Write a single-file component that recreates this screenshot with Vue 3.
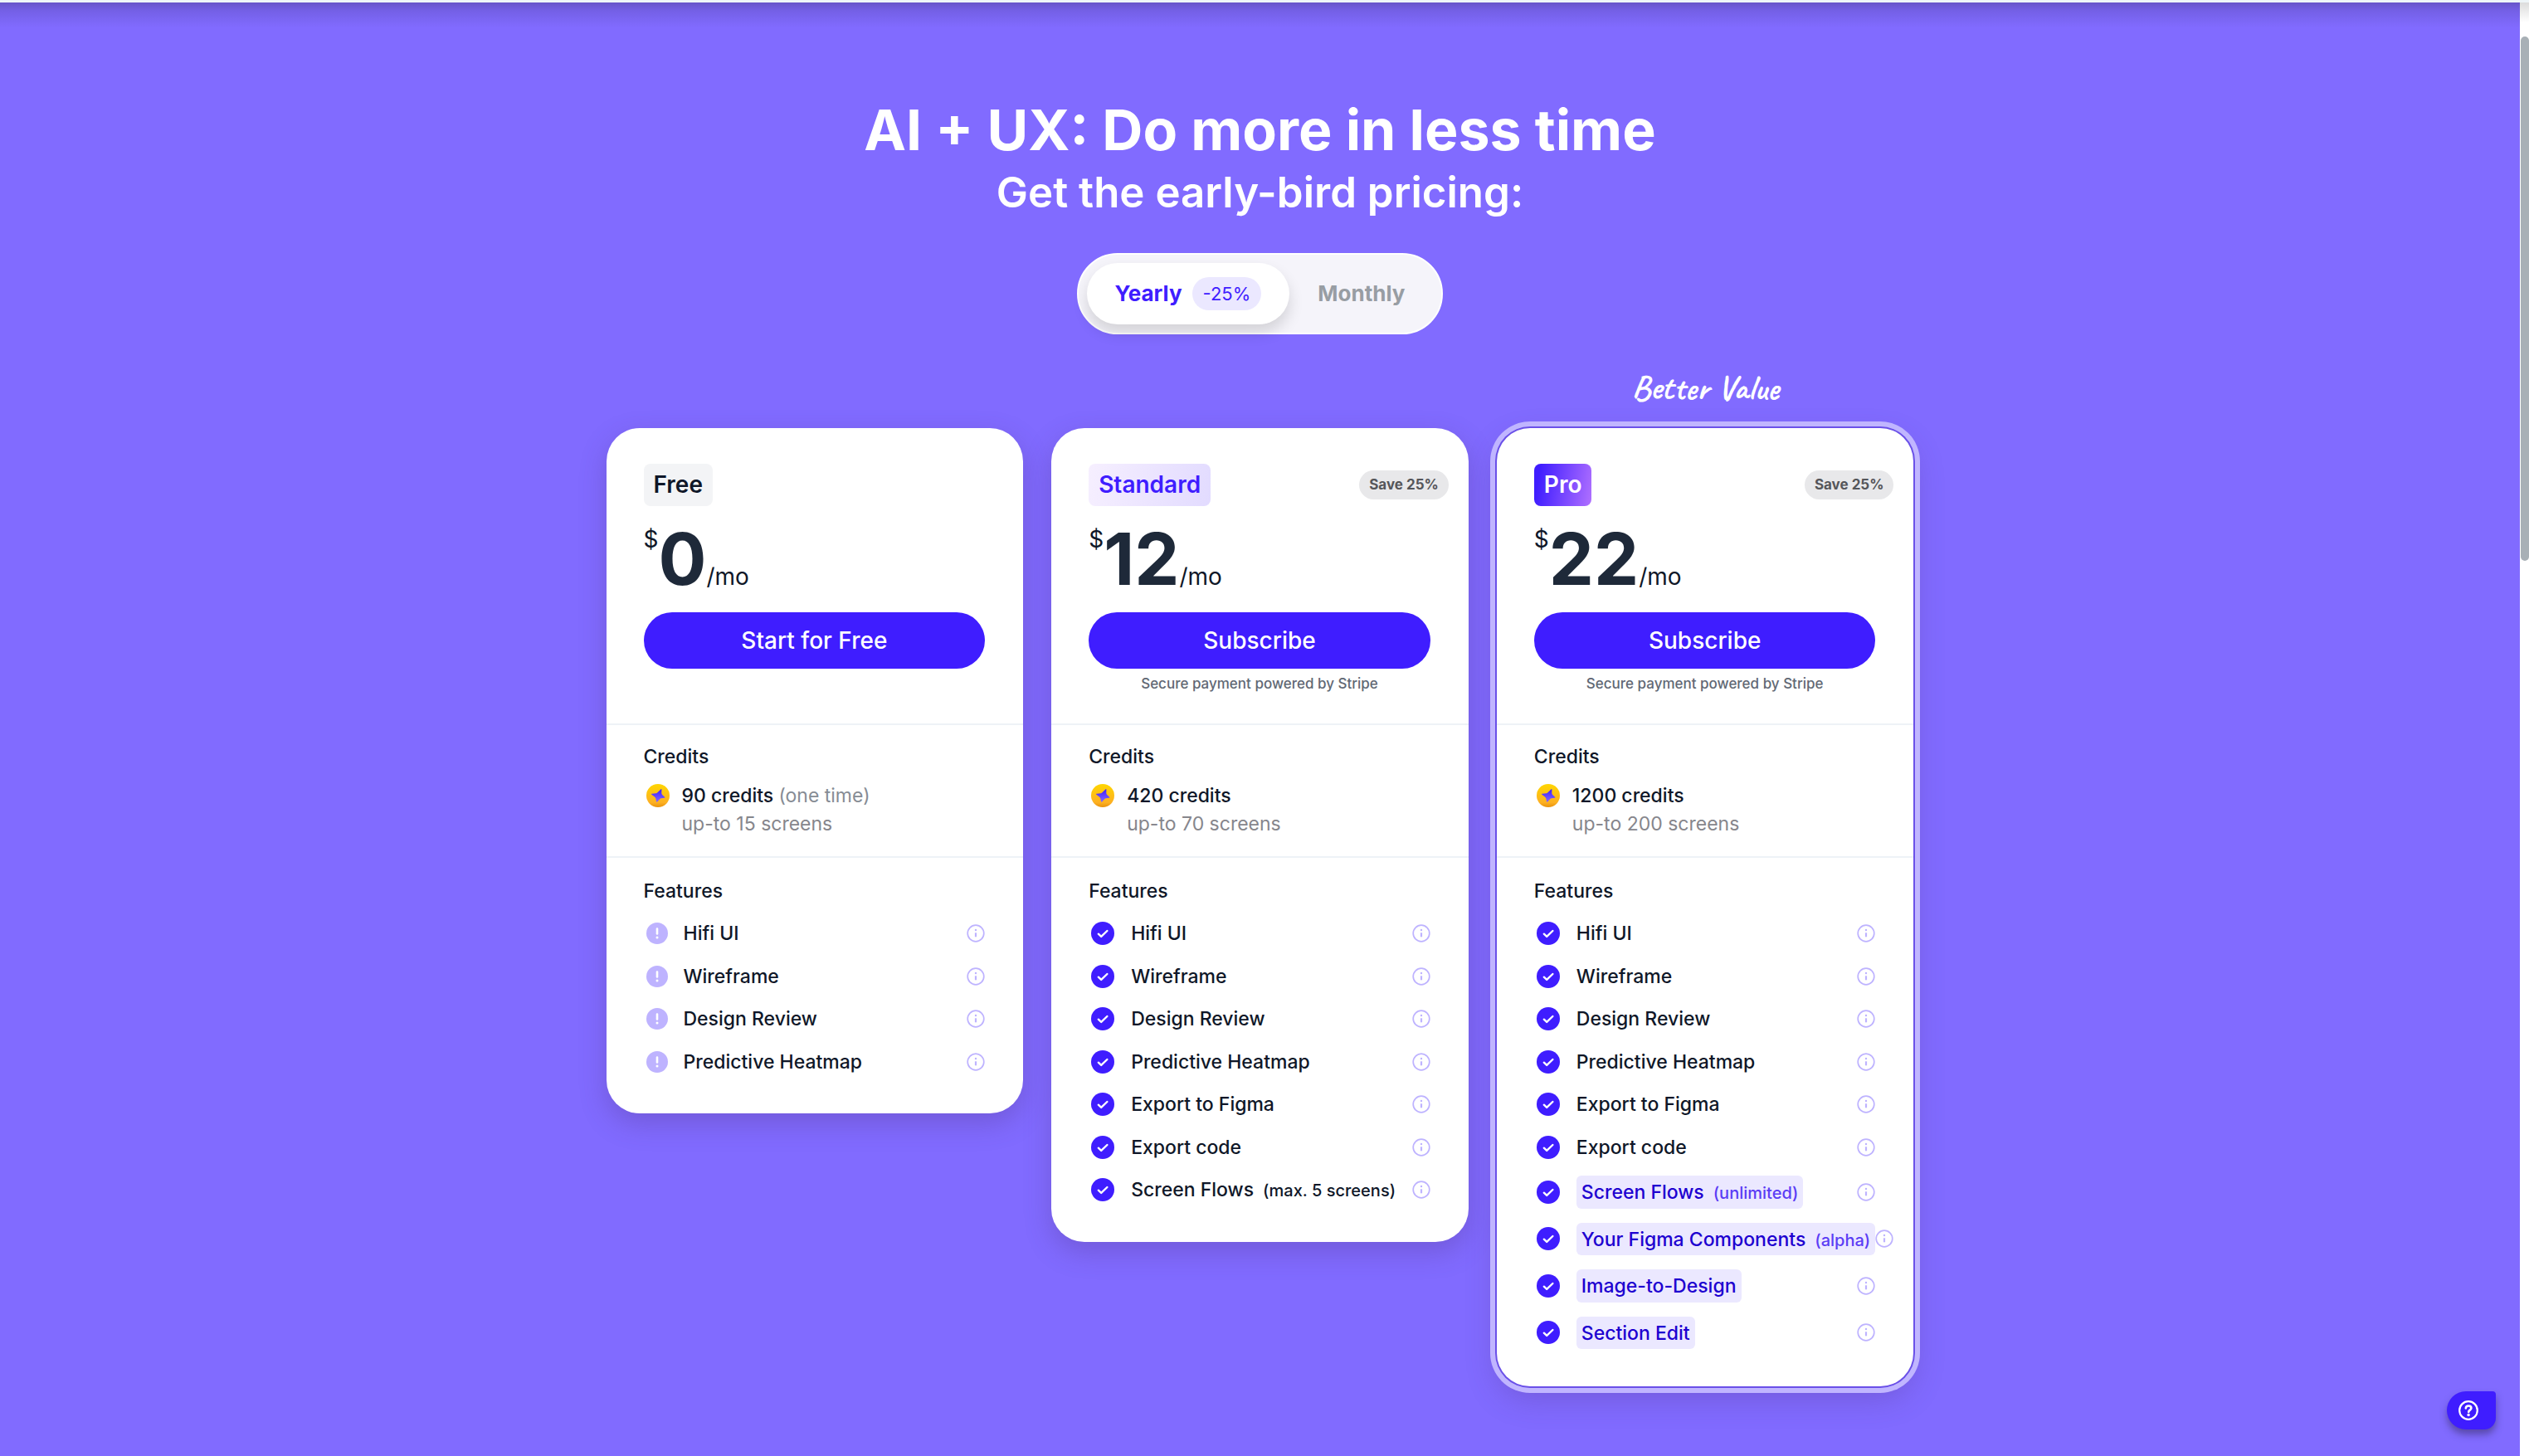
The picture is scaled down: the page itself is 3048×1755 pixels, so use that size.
<script setup>
import { ref } from 'vue'

const billing = ref('yearly')

const base = ['Hifi UI', 'Wireframe', 'Design Review', 'Predictive Heatmap']
const toRows = (names) => names.map((name) => ({ name }))

const plans = [
  {
    id: 'free',
    name: 'Free',
    price: '0',
    action: 'Start for Free',
    credits: '90 credits',
    once: '(one time)',
    screens: 'up-to 15 screens',
    limited: true,
    features: toRows(base),
  },
  {
    id: 'standard',
    name: 'Standard',
    price: '12',
    action: 'Subscribe',
    save: 'Save 25%',
    secure: 'Secure payment powered by Stripe',
    credits: '420 credits',
    screens: 'up-to 70 screens',
    features: [
      ...toRows([...base, 'Export to Figma', 'Export code']),
      { name: 'Screen Flows', note: '(max. 5 screens)' },
    ],
  },
  {
    id: 'pro',
    name: 'Pro',
    price: '22',
    action: 'Subscribe',
    save: 'Save 25%',
    secure: 'Secure payment powered by Stripe',
    ribbon: 'Better Value',
    credits: '1200 credits',
    screens: 'up-to 200 screens',
    features: [
      ...toRows([...base, 'Export to Figma', 'Export code']),
      { name: 'Screen Flows', note: '(unlimited)', hot: true },
      { name: 'Your Figma Components', note: '(alpha)', hot: true },
      { name: 'Image-to-Design', hot: true },
      { name: 'Section Edit', hot: true },
    ],
  },
]
</script>

<template>
  <div class="page">
    <main class="pricing">
      <h1>AI + UX: Do more in less time</h1>
      <h2>Get the early-bird pricing:</h2>

      <div class="toggle">
        <button
          type="button"
          class="option"
          :class="{ active: billing === 'yearly' }"
          @click="billing = 'yearly'"
        >
          Yearly <span class="discount">-25%</span>
        </button>
        <button
          type="button"
          class="option"
          :class="{ active: billing === 'monthly' }"
          @click="billing = 'monthly'"
        >
          Monthly
        </button>
      </div>

      <div class="plans">
        <article v-for="plan in plans" :key="plan.id" class="card" :class="plan.id">
          <span v-if="plan.ribbon" class="ribbon">{{ plan.ribbon }}</span>

          <section class="summary">
            <header class="title">
              <h3>{{ plan.name }}</h3>
              <span v-if="plan.save" class="save">{{ plan.save }}</span>
            </header>
            <div class="price">
              <span class="currency">$</span>
              <strong>{{ plan.price }}</strong>
              <span class="per">/mo</span>
            </div>
            <button type="button" class="cta">{{ plan.action }}</button>
            <p v-if="plan.secure" class="secure">{{ plan.secure }}</p>
          </section>

          <section class="credits">
            <h4>Credits</h4>
            <div class="credit-row">
              <svg class="coin" viewBox="0 0 28 28" aria-hidden="true">
                <defs>
                  <linearGradient :id="'coin-' + plan.id" x1="0" y1="0" x2="0" y2="1">
                    <stop offset="0" stop-color="#ffd600" />
                    <stop offset="0.8" stop-color="#fdb022" />
                    <stop offset="1" stop-color="#e8920c" />
                  </linearGradient>
                  <linearGradient :id="'star-' + plan.id" x1="0" y1="0" x2="0" y2="1">
                    <stop offset="0" stop-color="#3f1dff" />
                    <stop offset="1" stop-color="#8468ff" />
                  </linearGradient>
                </defs>
                <circle cx="14" cy="14" r="14" :fill="`url(#coin-${plan.id})`" />
                <path
                  d="M17.6 6.2Q18.5 5.8 18.4 6.9L18.3 11.2Q18.5 12.4 19.4 13.2L22.2 15.8Q22.9 16.7 21.8 16.8L17.7 17.2Q16.6 17.4 15.8 18.4L13.2 21.4Q12.3 22.2 12 21L11.4 17.7Q11 16.4 9.9 15.6L6.3 12.8Q5.5 12 6.6 11.8L11.4 11.3Q12.6 11.2 13.4 10.3Z"
                  :fill="`url(#star-${plan.id})`"
                />
              </svg>
              <div>
                <p class="amount">
                  {{ plan.credits }} <span v-if="plan.once">{{ plan.once }}</span>
                </p>
                <p class="screens">{{ plan.screens }}</p>
              </div>
            </div>
          </section>

          <section class="features">
            <h4>Features</h4>
            <ul>
              <li v-for="f in plan.features" :key="f.name">
                <svg v-if="plan.limited" class="mark small" viewBox="0 0 26 26" aria-hidden="true">
                  <circle cx="13" cy="13" r="13" fill="#beb3ff" />
                  <path d="M13 7.5v6" stroke="#fff" stroke-width="2.6" stroke-linecap="round" />
                  <circle cx="13" cy="18" r="1.5" fill="#fff" />
                </svg>
                <svg v-else class="mark" viewBox="0 0 28 28" aria-hidden="true">
                  <circle cx="14" cy="14" r="14" fill="#3f1dff" />
                  <path
                    d="M8.8 14.7l3.4 3.2 7.2-6.9"
                    fill="none"
                    stroke="#fff"
                    stroke-width="2.4"
                    stroke-linecap="round"
                    stroke-linejoin="round"
                  />
                </svg>
                <span class="label" :class="{ hot: f.hot }">
                  {{ f.name }}<span v-if="f.note" class="note">{{ f.note }}</span>
                </span>
                <button type="button" class="info" :aria-label="'About ' + f.name">
                  <svg viewBox="0 0 22 22" aria-hidden="true">
                    <circle cx="11" cy="11" r="9.8" fill="none" stroke="#beb3ff" stroke-width="1.7" />
                    <path d="M11 10.3v5" stroke="#beb3ff" stroke-width="2.2" />
                    <circle cx="11" cy="7" r="1.2" fill="#beb3ff" />
                  </svg>
                </button>
              </li>
            </ul>
          </section>
        </article>
      </div>
    </main>

    <div class="rail" aria-hidden="true"><div class="thumb"></div></div>

    <button type="button" class="help" aria-label="Help">
      <svg viewBox="0 0 24 24" aria-hidden="true">
        <g fill="none" stroke="#fff" stroke-width="2.2" stroke-linecap="round">
          <circle cx="12" cy="12" r="10.8" />
          <path
            d="M8.8 9.4C9 7.4 10.3 6.5 12.1 6.5C14 6.5 15.4 7.7 15.4 9.3C15.4 11.6 12.2 11.7 12.2 13.9"
            stroke-width="2.6"
          />
        </g>
        <circle cx="12.1" cy="17.5" r="1.7" fill="#fff" />
      </svg>
    </button>
  </div>
</template>

<style>
body {
  background: #816bff;
}
</style>

<style scoped>
.page {
  display: flex;
  min-height: 100vh;
  box-sizing: border-box;
  border-top: 3px solid #eef5f8;
  background: #816bff;
  color: #0f1728;
  font-family: Inter, "Liberation Sans", sans-serif;
}

h1,
h2,
h3,
h4,
p,
ul {
  margin: 0;
  padding: 0;
}

button {
  border: 0;
  font-family: inherit;
  cursor: pointer;
}

.pricing {
  display: flex;
  flex: 1;
  flex-direction: column;
  align-items: center;
  padding: 111px 24px 75px;
  background: linear-gradient(#6754c9, #7460e6 10px, #816bff 30px);
}

h1 {
  color: #fff;
  font-size: 68px;
  font-weight: 700;
  line-height: 84px;
}

h2 {
  margin-top: 2px;
  color: #fff;
  font-size: 51px;
  font-weight: 600;
  line-height: 64px;
}

.toggle {
  display: flex;
  margin-top: 41px;
  padding: 10px;
  border: 2px solid #fff;
  border-radius: 49px;
  background: #f5f4fa;
}

.option {
  display: flex;
  align-items: center;
  gap: 12px;
  height: 74px;
  padding: 0 34px 1px;
  border-radius: 37px;
  background: transparent;
  color: #989da3;
  font-size: 26px;
  font-weight: 700;
}

.option.active {
  background: #fff;
  color: #3f1dff;
  box-shadow: 0 10px 18px rgba(0, 0, 0, 0.14);
}

.discount {
  padding: 0 13px;
  border-radius: 20px;
  background: #ebe8ff;
  font-size: 22px;
  font-weight: 400;
  line-height: 40px;
}

.plans {
  display: grid;
  grid-template-columns: repeat(3, minmax(0, 1fr));
  align-items: start;
  gap: 34px;
  width: 100%;
  max-width: 1576px;
  margin-top: 113px;
}

.card {
  position: relative;
  border-radius: 40px;
  background: #fff;
  box-shadow: 0 12px 32px rgba(80, 50, 130, 0.3);
}

.card.pro {
  box-shadow: 0 0 0 2px #6a50e8, 0 0 0 8px #c0b5ff, 0 14px 36px rgba(80, 50, 130, 0.3);
}

.ribbon {
  position: absolute;
  right: 0;
  bottom: 100%;
  left: 0;
  margin-bottom: 24px;
  color: #fff;
  font-family: Caveat, cursive;
  font-size: 42px;
  font-weight: 700;
  line-height: 48px;
  text-align: center;
}

.summary {
  box-sizing: border-box;
  min-height: 356px;
  padding: 43px 46px 0 45px;
}

.title {
  display: flex;
  align-items: center;
  justify-content: space-between;
  margin-right: -22px;
}

h3 {
  padding: 0 12px;
  border-radius: 8px;
  background: #f3f4f6;
  font-size: 28px;
  font-weight: 600;
  line-height: 51px;
}

.standard h3 {
  background: linear-gradient(100deg, #f6efff, #e2dbff);
  color: #3f1dff;
}

.pro h3 {
  background: linear-gradient(100deg, #3f1dff 10%, #b070ff);
  color: #fff;
}

.save {
  padding: 0 12px;
  border-radius: 18px;
  background: #e8e8ea;
  color: #55565a;
  font-size: 17px;
  font-weight: 700;
  line-height: 35px;
}

.price {
  display: flex;
  align-items: baseline;
  margin-top: 21px;
  font-size: 28px;
}

.currency {
  align-self: flex-start;
  line-height: 38px;
}

.price strong {
  color: #1e2939;
  font-size: 86px;
  font-weight: 700;
  line-height: 86px;
}

.per {
  line-height: 34px;
}

.cta {
  display: block;
  width: 100%;
  height: 68px;
  margin-top: 21px;
  border-radius: 34px;
  background: #3f1dff;
  color: #fff;
  font-size: 28px;
  font-weight: 500;
}

.secure {
  margin-top: 6px;
  color: #616874;
  font-size: 17px;
  font-weight: 500;
  line-height: 24px;
  text-align: center;
}

.credits,
.features {
  border-top: 2px solid #eef2f7;
}

.credits {
  padding: 23px 46px 22px 45px;
}

.features {
  padding: 25px 46px 45px 45px;
}

h4 {
  font-size: 23px;
  font-weight: 500;
  line-height: 30px;
}

.credit-row {
  display: flex;
  gap: 15px;
  margin-top: 15px;
  font-size: 23px;
  line-height: 34px;
}

.coin {
  width: 28px;
  height: 28px;
  margin: 3px 0 0 3px;
}

.amount {
  font-weight: 500;
}

.amount span {
  color: #868c94;
  font-weight: 400;
}

.screens {
  color: #86868c;
}

ul {
  display: flex;
  flex-direction: column;
  gap: 17px;
  margin-top: 19px;
  list-style: none;
}

li {
  display: flex;
  align-items: center;
}

.mark {
  flex: none;
  width: 28px;
  height: 28px;
  margin: 0 20px 0 3px;
}

.mark.small {
  width: 26px;
  height: 26px;
  margin-right: 19px;
}

.label {
  flex: none;
  border-radius: 6px;
  font-size: 23px;
  font-weight: 500;
  line-height: 1.5;
  white-space: nowrap;
}

.label.hot {
  padding: 3px 6px 2px;
  background: #ebe8ff;
  color: #1d00d0;
}

.note {
  margin-left: 11px;
  font-size: 20px;
}

.hot .note {
  color: #5b3df5;
}

.info {
  flex: none;
  width: 22px;
  height: 22px;
  margin-left: auto;
  padding: 0;
  background: transparent;
}

.info svg {
  display: block;
}

.rail {
  flex: none;
  width: 11px;
  box-sizing: border-box;
  padding: 41px 0 0 1px;
  background: linear-gradient(#dcdcdc, #fff 24px);
}

.thumb {
  height: 36vh;
  border-radius: 5px;
  background: #a8b0b6;
}

.help {
  position: fixed;
  right: 40px;
  bottom: 32px;
  display: flex;
  align-items: center;
  width: 59px;
  height: 46px;
  padding: 0 0 0 14px;
  border-radius: 23px 4px 14px 23px;
  background: #3f1dff;
  box-shadow: 0 6px 8px rgba(50, 40, 90, 0.5);
}

.help svg {
  width: 24px;
  height: 24px;
}
</style>
